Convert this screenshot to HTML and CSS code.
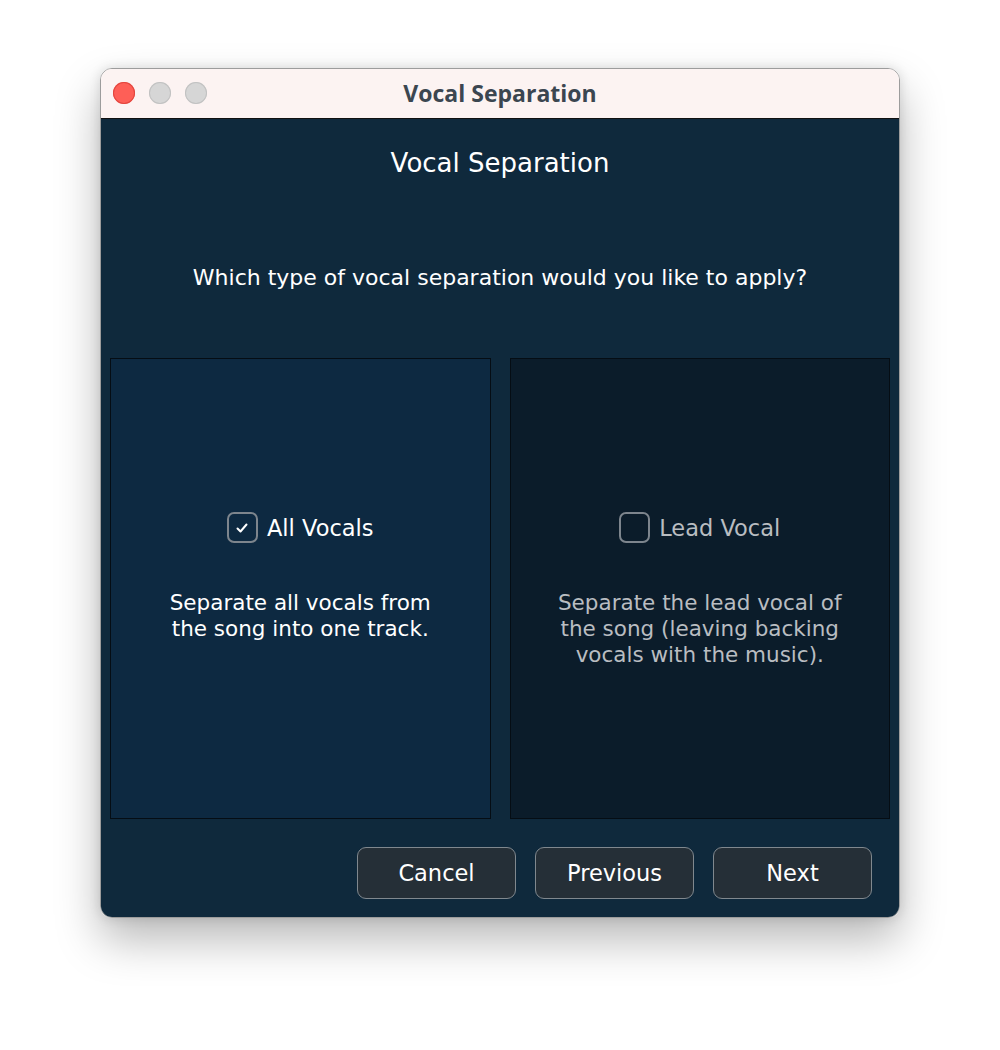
FILE: index.html
```html
<!DOCTYPE html>
<html lang="en">
<head>
    <meta charset="UTF-8">
    <meta name="viewport" content="width=device-width, initial-scale=1.0">
    <title>Vocal Separation</title>
    <link rel="stylesheet" href="styles.css">
</head>
<body>

<div class="window">
    <div class="titlebar">
        <div class="lights">
            <span class="light close"></span>
            <span class="light"></span>
            <span class="light"></span>
        </div>
        <div class="title">Vocal Separation</div>
    </div>
    <div class="content">
        <h1>Vocal Separation</h1>
        <p class="question">Which type of vocal separation would you like to apply?</p>
        <div class="options">
            <div class="option selected">
                <label class="check-row">
                    <span class="checkbox">
                        <svg width="16" height="16" viewBox="0 0 16 16"><path d="M3.5 8.5 L6.5 11.5 L12.5 4.5" fill="none" stroke="#fff" stroke-width="2" stroke-linecap="round" stroke-linejoin="round"/></svg>
                    </span>
                    All Vocals
                </label>
                <p class="desc">Separate all vocals from<br>the song into one track.</p>
            </div>
            <div class="option">
                <label class="check-row">
                    <span class="checkbox"></span>
                    Lead Vocal
                </label>
                <p class="desc">Separate the lead vocal of<br>the song (leaving backing<br>vocals with the music).</p>
            </div>
        </div>
        <div class="buttons">
            <button>Cancel</button>
            <button>Previous</button>
            <button>Next</button>
        </div>
    </div>
</div>

</body>
</html>
```

FILE: styles.css
```css
body {
    margin: 0;
    padding: 68px 100px;
    background-color: #fff;
    font-family: "DejaVu Sans", Verdana, sans-serif;
}
.window {
    width: 800px;
    height: 850px;
    box-sizing: border-box;
    border: 1px solid #9c9c9c;
    border-radius: 12px;
    overflow: hidden;
    display: flex;
    flex-direction: column;
    box-shadow: 0 22px 45px rgba(0, 0, 0, 0.28), 0 0 12px rgba(0, 0, 0, 0.12);
}
.titlebar {
    height: 49px;
    flex-shrink: 0;
    background-color: #fcf3f2;
    border-bottom: 1px solid #111;
    display: flex;
    align-items: center;
    position: relative;
}
.lights {
    display: flex;
    gap: 14px;
    padding-left: 12px;
    margin-top: -2px;
}
.light {
    width: 22px;
    height: 22px;
    border-radius: 50%;
    background-color: #d6d6d6;
    box-shadow: inset 0 0 0 1px #c2c2c2;
}
.light.close {
    background-color: #fe5f57;
    box-shadow: inset 0 0 0 1px #e2463f;
}
.title {
    position: absolute;
    left: 0;
    right: 0;
    top: 8px;
    text-align: center;
    font-family: "Open Sans", sans-serif;
    font-weight: 700;
    font-size: 23px;
    color: #3b4650;
}
.content {
    flex: 1;
    background-color: #0f293c;
    color: #fff;
    padding: 0 9px;
    display: flex;
    flex-direction: column;
}
.content h1 {
    margin: 28px 0 0;
    font-size: 26px;
    line-height: 32px;
    font-weight: normal;
    text-align: center;
}
.question {
    margin: 85px 0 0;
    font-size: 22px;
    line-height: 28px;
    text-align: center;
}
.options {
    margin-top: 66px;
    display: flex;
    gap: 19px;
}
.option {
    flex: 1;
    height: 461px;
    box-sizing: border-box;
    border: 1px solid #050d14;
    background-color: #0b1c2a;
    color: #b9bdc1;
    padding-top: 153px;
    display: flex;
    flex-direction: column;
    align-items: center;
}
.option.selected {
    background-color: #0d2941;
    color: #fff;
}
.check-row {
    display: flex;
    align-items: center;
    gap: 9px;
    font-size: 22.5px;
}
.checkbox {
    width: 27px;
    height: 27px;
    border: 2px solid #7d858d;
    border-radius: 7px;
    display: flex;
    align-items: center;
    justify-content: center;
}
.desc {
    margin: 47px 0 0;
    font-size: 21.5px;
    line-height: 26px;
    text-align: center;
}
.buttons {
    margin-top: 28px;
    padding-right: 18px;
    display: flex;
    justify-content: flex-end;
    gap: 19px;
}
.buttons button {
    width: 159px;
    height: 52px;
    border: 1.5px solid #80888e;
    border-radius: 9px;
    background-color: #252f37;
    color: #fff;
    font-family: "DejaVu Sans", Verdana, sans-serif;
    font-size: 22.5px;
    cursor: pointer;
}
```
